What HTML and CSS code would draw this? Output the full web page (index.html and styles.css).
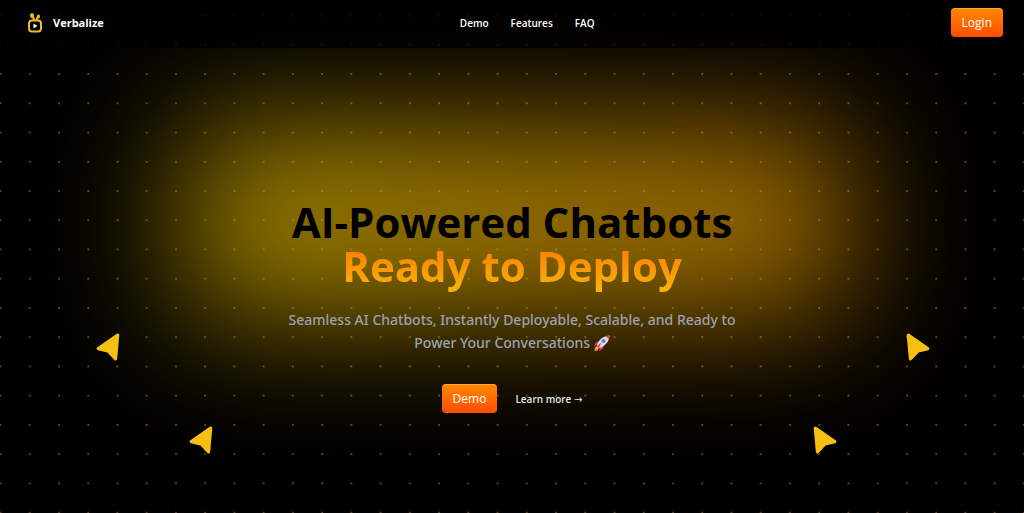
FILE: index.html
```html
<!DOCTYPE html>
<html lang="en">
<head>
<meta charset="utf-8">
<meta name="viewport" content="width=device-width, initial-scale=1">
<title>Verbalize</title>
<link rel="stylesheet" href="styles.css">
</head>
<body>
<div class="backdrop" aria-hidden="true">
  <div class="glow"></div>
  <svg class="dots" width="100%" height="100%">
    <defs>
      <pattern id="dot" width="40" height="40" patternUnits="userSpaceOnUse" patternTransform="translate(15 0) scale(.731)">
        <rect x="19" y="20" width="2.4" height="2.4" fill="#d9a53c" fill-opacity=".5"/>
      </pattern>
    </defs>
    <rect width="100%" height="100%" fill="url(#dot)"/>
  </svg>
</div>
<header class="header">
  <a class="brand" href="#">
    <svg class="logo" viewBox="0 0 16 20" aria-hidden="true">
      <g fill="none" stroke="#eebb26" stroke-width="2" stroke-linecap="round">
        <rect x="2" y="7.500" width="12" height="11" rx="3"/>
        <path d="M7 6.500 5.500 3M9.500 6.500 11 3.500"/>
      </g>
      <ellipse cx="5" cy="2.500" rx="2" ry="2.500" fill="#eebb26"/>
      <ellipse cx="11.500" cy="3.500" rx="1.500" ry="2" fill="#eebb26"/>
      <path d="M6.500 10.500v5l4-2.500z" fill="#fff"/>
    </svg>
    <span>Verbalize</span>
  </a>
  <nav class="nav">
    <a href="#demo">Demo</a>
    <a href="#features">Features</a>
    <a href="#faq">FAQ</a>
  </nav>
  <button class="button" type="button">Login</button>
</header>
<main class="hero">
  <h1 class="title">AI-Powered Chatbots<span class="accent">Ready to Deploy</span></h1>
  <p class="lead">Seamless AI Chatbots, Instantly Deployable, Scalable, and Ready to Power Your Conversations <svg class="rocket" viewBox="0 0 16 16" role="img" aria-label="rocket">
    <path d="M5 6 2 7.500 0 11l4-1zM10 11l-1.500 3L5 16l1-4z" fill="#e8386d"/>
    <path d="M1 12.500 3 11l2 2-1.500 2.500L.5 16z" fill="#f59a2c"/>
    <path d="M3 11C4 6 8 1 15.500.5 15.500 7 10 12 5 13z" fill="#e4dce8"/>
    <path d="M11.500 1.300 15.500.5 15 4.500z" fill="#ec3f68"/>
    <path d="M3 11 7.500 7.500 5 13z" fill="#e8386d"/>
    <circle cx="9.500" cy="6" r="2" fill="#4c8fc7"/>
  </svg></p>
  <div class="actions">
    <button class="button" type="button">Demo</button>
    <a class="more" href="#features">Learn more <span class="arrow" aria-hidden="true">→</span></a>
  </div>
</main>
<div class="pointers" aria-hidden="true">
  <svg class="pointer outer left" viewBox="0 0 22 26"><path d="M2 2 20 14.500 10.500 17 4 24z"/></svg>
  <svg class="pointer inner left" viewBox="0 0 22 26"><path d="M2 2 20 14.500 10.500 17 4 24z"/></svg>
  <svg class="pointer inner right" viewBox="0 0 22 26"><path d="M2 2 20 14.500 10.500 17 4 24z"/></svg>
  <svg class="pointer outer right" viewBox="0 0 22 26"><path d="M2 2 20 14.500 10.500 17 4 24z"/></svg>
</div>
</body>
</html>
```
FILE: styles.css
```css
* { box-sizing: border-box; }

body {
  margin: 0;
  min-height: 100vh;
  position: relative;
  overflow-x: hidden;
  background: #000;
  color: #fff;
  font-family: "Open Sans", "Noto Sans", sans-serif;
}

a { color: inherit; text-decoration: none; }

.backdrop {
  position: absolute;
  inset: 0;
  overflow: hidden;
}

.glow {
  position: absolute;
  top: 126px;
  left: 18%;
  right: 17%;
  height: 190px;
  background: linear-gradient(90deg, #ffd500, #ffa800);
  opacity: .62;
  filter: blur(68px);
}

.dots { position: absolute; inset: 0; }

.header {
  position: relative;
  display: flex;
  justify-content: space-between;
  align-items: center;
  height: 48px;
  padding: 0 21px 3px 27px;
  background: rgba(0, 0, 0, .8);
}

.brand {
  display: flex;
  align-items: center;
  gap: 10px;
  font-size: 11px;
  font-weight: 700;
}

.logo { width: 16px; height: 20px; }

.nav {
  display: flex;
  gap: 22px;
  font-size: 10px;
  font-weight: 600;
}

.button {
  height: 29px;
  padding: 0 11px;
  border: 0;
  border-radius: 4px;
  background: linear-gradient(#ff8800, #ff4d00);
  box-shadow: inset 0 1px 0 rgba(255, 255, 255, .25);
  color: #fff;
  font: 400 12px "Open Sans", "Noto Sans", sans-serif;
}

.hero {
  position: relative;
  display: flex;
  flex-direction: column;
  align-items: center;
  padding: 152px 24px 100px;
  text-align: center;
}

.title {
  margin: 0;
  color: #000;
  font-size: 42px;
  font-weight: 700;
  line-height: 44px;
}

.accent {
  display: block;
  padding-bottom: 6px;
  background: linear-gradient(#ff7a00, #f5b80c);
  background-clip: text;
  -webkit-background-clip: text;
  color: transparent;
}

.lead {
  max-width: 468px;
  margin: 14px 0 30px;
  color: #9ca3af;
  font-family: "Noto Sans", "Open Sans", sans-serif;
  font-size: 14px;
  font-weight: 500;
  line-height: 23px;
}

.rocket { width: 16px; height: 16px; vertical-align: -3px; }

.actions { display: flex; align-items: center; gap: 18px; }

.more { font-size: 10px; font-weight: 600; color: #e5e7eb; }

.arrow { font-family: "DejaVu Sans", sans-serif; font-weight: 400; }

.pointer {
  position: absolute;
  width: 24px;
  height: 28px;
  fill: #f5c012;
  stroke: #f5c012;
  stroke-width: 3;
  stroke-linejoin: round;
}

.outer { top: 333px; }
.inner { top: 426px; }
.outer.left { left: 96px; transform: scaleX(-1); }
.outer.right { right: 94px; }
.inner.left { left: 189px; transform: scaleX(-1); }
.inner.right { right: 187px; }
```
